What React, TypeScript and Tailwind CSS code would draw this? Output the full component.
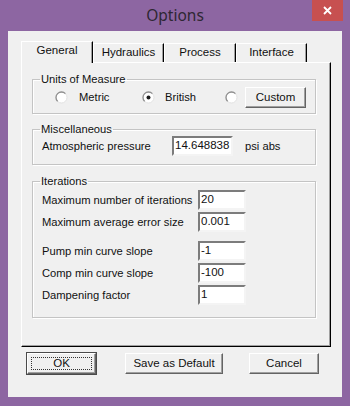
import React from "react";

const font = { fontFamily: '"Liberation Sans", Arial, sans-serif' };

function Radio({ checked }: { checked?: boolean }) {
  return (
    <svg width="13" height="13" viewBox="0 0 13 13" className="shrink-0">
      <circle cx="6.5" cy="6.5" r="5.5" fill="#fff" stroke="#e2e2e2" strokeWidth="1" />
      <path d="M2.6 10.4 A5.5 5.5 0 0 1 10.4 2.6" stroke="#8f8f8f" strokeWidth="1.3" fill="none" />
      {checked && <circle cx="6.5" cy="6.5" r="2" fill="#1a1a1a" />}
    </svg>
  );
}

function Field({ value, width }: { value: string; width: string }) {
  return (
    <div
      className={`${width} h-[20px] bg-white border-2 border-t-[#7c7c7c] border-l-[#7c7c7c] border-b-[#f4f4f4] border-r-[#f4f4f4] flex items-center pl-[1px] text-[11.5px] text-[#111]`}
    >
      {value}
    </div>
  );
}

function Button({ label, width, isDefault }: { label: string; width: string; isDefault?: boolean }) {
  return (
    <div
      className={`${width} h-[21px] bg-[#f0f0f0] border border-t-white border-l-white border-b-[#646464] border-r-[#646464] shadow-[inset_-1px_-1px_0_#a0a0a0] flex items-center justify-center text-[11.5px] text-[#111] ${
        isDefault ? "outline outline-1 outline-[#4a4a4a]" : ""
      }`}
    >
      {isDefault ? (
        <div className="w-[calc(100%-6px)] h-[calc(100%-6px)] border border-dotted border-[#333] flex items-center justify-center">
          {label}
        </div>
      ) : (
        label
      )}
    </div>
  );
}

function Tab({ label, width, active }: { label: string; width: string; active?: boolean }) {
  return (
    <div
      className={`${width} ${
        active ? "h-[22px] -mb-[1px] z-10 pb-[3px]" : "h-[19px]"
      } relative bg-[#f0f0f0] border-t border-l border-t-white border-l-white border-r border-r-black shadow-[inset_-1px_0_0_#a0a0a0] flex items-center justify-center text-[11.5px] text-[#111]`}
    >
      {label}
    </div>
  );
}

function Group({ title, className, children }: { title: string; className?: string; children: React.ReactNode }) {
  return (
    <fieldset
      className={`w-[284px] border border-[#c4c4c4] shadow-[inset_1px_1px_0_#fff,1px_1px_0_#fff] ${className ?? ""}`}
    >
      <legend className="ml-[7px] px-[1px] text-[11.2px] leading-[13px] text-[#111]">{title}</legend>
      {children}
    </fieldset>
  );
}

const iterations = [
  { label: "Maximum number of iterations", value: "20" },
  { label: "Maximum average error size", value: "0.001" },
  { label: "Pump min curve slope", value: "-1" },
  { label: "Comp min curve slope", value: "-100" },
  { label: "Dampening factor", value: "1" },
];

export default function App() {
  return (
    <div className="w-[350px] h-[406px] bg-[#8d66a2] flex flex-col" style={font}>
      {/* title bar */}
      <div className="relative h-[31px] flex items-center justify-center">
        <span className="text-[15.5px] text-[#2e2633] pt-[1px]" style={{ fontFamily: '"Noto Sans", "Open Sans", sans-serif' }}>
          Options
        </span>
        <div className="absolute right-[7px] top-0 w-[31px] h-[21px] bg-[#c75050] flex items-center justify-center">
          <svg width="9" height="9" viewBox="0 0 9 9">
            <path d="M1 1 L8 8 M8 1 L1 8" stroke="#fff" strokeWidth="1.8" />
          </svg>
        </div>
      </div>

      {/* client */}
      <div className="mx-[8px] h-[366px] bg-[#f0f0f0] pt-[10px] px-[13px] flex flex-col">
        <div className="flex items-end h-[21px]">
          <Tab label="General" width="w-[72px]" active />
          <Tab label="Hydraulics" width="w-[71px]" />
          <Tab label="Process" width="w-[72px]" />
          <Tab label="Interface" width="w-[71px]" />
        </div>

        <div className="w-[310px] h-[285px] border border-t-white border-l-white border-r-black border-b-black shadow-[inset_-1px_-1px_0_#a0a0a0] flex flex-col pl-[10px] pt-[10px]">
          <Group title="Units of Measure" className="pb-[5px]">
            <div className="flex items-center h-[21px] mt-[1px] pl-[22px] text-[11.2px] text-[#111]">
              <div className="w-[87px] flex items-center gap-[11px]">
                <Radio />
                <span>Metric</span>
              </div>
              <div className="w-[83px] flex items-center gap-[10px]">
                <Radio checked />
                <span>British</span>
              </div>
              <div className="w-[20px] flex items-center">
                <Radio />
              </div>
              <Button label="Custom" width="w-[61px]" />
            </div>
          </Group>

          <Group title="Miscellaneous" className="mt-[9px] pb-[8px]">
            <div className="flex items-center pl-[9px] text-[11.2px] text-[#111]">
              <span className="w-[130px]">Atmospheric pressure</span>
              <Field value="14.648838" width="w-[61px]" />
              <span className="ml-[12px]">psi abs</span>
            </div>
          </Group>

          <Group title="Iterations" className="mt-[10px] pb-[12px]">
            <div className="flex flex-col pl-[9px] pt-[2px] text-[11.2px] text-[#111]">
              {iterations.map((row, i) => (
                <div key={row.label} className={`flex items-center ${i === 0 ? "" : i === 2 ? "mt-[9px]" : "mt-[2px]"}`}>
                  <span className="w-[156px]">{row.label}</span>
                  <Field value={row.value} width="w-[48px]" />
                </div>
              ))}
            </div>
          </Group>
        </div>

        <div className="flex items-center mt-[6px]">
          <div className="ml-[6px]">
            <Button label="OK" width="w-[69px]" isDefault />
          </div>
          <div className="ml-[29px]">
            <Button label="Save as Default" width="w-[98px]" />
          </div>
          <div className="ml-[26px]">
            <Button label="Cancel" width="w-[70px]" />
          </div>
        </div>
      </div>
    </div>
  );
}
